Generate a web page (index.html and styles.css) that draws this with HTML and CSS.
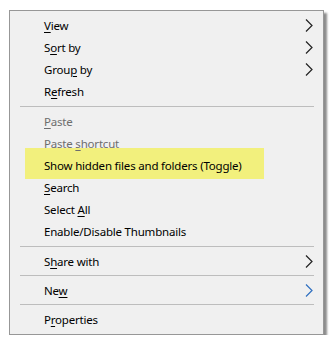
FILE: index.html
```html
<!DOCTYPE html>
<html lang="en">
<head>
  <meta charset="UTF-8" />
  <title>Context menu</title>
  <link rel="stylesheet" href="styles.css">
</head>
<body>

  <div class="menu">
    <div class="item"><span><u>V</u>iew</span>
      <svg class="chev" viewBox="0 0 8 13"><path d="M1 0.5 L7 6.5 L1 12.5"/></svg></div>
    <div class="item"><span>S<u>o</u>rt by</span>
      <svg class="chev" viewBox="0 0 8 13"><path d="M1 0.5 L7 6.5 L1 12.5"/></svg></div>
    <div class="item"><span>Grou<u>p</u> by</span>
      <svg class="chev" viewBox="0 0 8 13"><path d="M1 0.5 L7 6.5 L1 12.5"/></svg></div>
    <div class="item"><span>R<u>e</u>fresh</span></div>

    <div class="sep"></div>

    <div class="item disabled"><span><u>P</u>aste</span></div>
    <div class="item disabled"><span>Paste <u>s</u>hortcut</span></div>
    <div class="item marked"><span>Show hidden files and folders (Toggle)</span></div>
    <div class="item"><span><u>S</u>earch</span></div>
    <div class="item"><span>Select <u>A</u>ll</span></div>
    <div class="item"><span>Enable/Disable Thumbnails</span></div>

    <div class="sep"></div>

    <div class="item"><span>S<u>h</u>are with</span>
      <svg class="chev" viewBox="0 0 8 13"><path d="M1 0.5 L7 6.5 L1 12.5"/></svg></div>

    <div class="sep short"></div>

    <div class="item"><span>Ne<u>w</u></span>
      <svg class="chev blue" viewBox="0 0 8 13"><path d="M1 0.5 L7 6.5 L1 12.5"/></svg></div>

    <div class="sep short"></div>

    <div class="item"><span>P<u>r</u>operties</span></div>
  </div>

</body>
</html>
```

FILE: styles.css
```css
* {
  box-sizing: border-box;
}
body {
  margin: 0;
  padding: 10px 0 0 9px;
  background: #fff;
  font-family: 'Noto Sans', 'Segoe UI', sans-serif;
  font-size: 11.5px;
  letter-spacing: -0.2px;
  color: #000;
}

/* Menu box */
.menu {
  width: 315px;
  height: 325px;
  background: #f0f0f0;
  border: 1px solid #979797;
  padding: 3px 0 4px;
  box-shadow: 3px 3px 2px rgba(0,0,0,0.45);
}

.item {
  position: relative;
  display: flex;
  align-items: center;
  height: 22px;
  padding: 1px 10px 0 34px;
  line-height: 21px;
}
.item span {
  position: relative;
  z-index: 1;
}
.item u {
  text-underline-offset: 2px;
}
.item.disabled {
  color: #6d6d6d;
}

/* yellow marker over one entry */
.item.marked::before {
  content: '';
  position: absolute;
  left: 15px;
  top: -6px;
  width: 239px;
  height: 31px;
  background: #f2f07d;
}

.chev {
  margin-left: auto;
  width: 8px;
  height: 13px;
  fill: none;
  stroke: #222;
  stroke-width: 1.2;
}
.chev.blue {
  stroke: #2f6fc0;
}

.sep {
  height: 8px;
  display: flex;
  align-items: center;
  padding: 0 9px 0 10px;
}
.sep::after {
  content: '';
  flex: 1;
  height: 1px;
  background: #bdbdbd;
}
.sep.short {
  height: 7px;
}
```
